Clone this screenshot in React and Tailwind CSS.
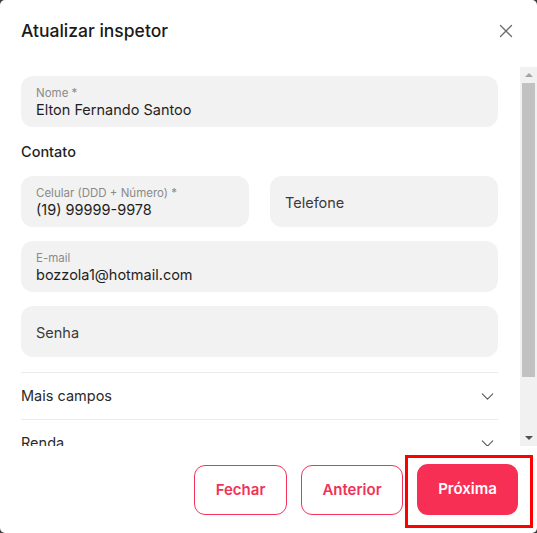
import { X, ChevronDown } from "lucide-react";

function Field({ label, value, placeholder }) {
  return (
    <div className="h-[51px] rounded-[12px] bg-[#f2f2f2] px-[15px] pt-[3px] flex flex-col justify-center">
      {label && <span className="text-[11.5px] leading-[14px] text-[#8a8a8a]">{label}</span>}
      {value && <span className="text-[14.5px] leading-[20px] text-[#1f1f1f]">{value}</span>}
      {placeholder && <span className="text-[14.5px] leading-[20px] text-[#3a3a3a]">{placeholder}</span>}
    </div>
  );
}

function Section({ title }) {
  return (
    <div className="border-t border-[#ebebeb] h-[47px] flex items-center justify-between">
      <span className="text-[14.5px] text-[#2a2a2a]">{title}</span>
      <ChevronDown className="h-[21px] w-[21px] text-[#555]" strokeWidth={1.2} />
    </div>
  );
}

function Scrollbar() {
  return (
    <div className="w-[17px] shrink-0 bg-[#f1f1f1] flex flex-col items-stretch">
      <div className="h-[16px] flex items-center justify-center">
        <div className="w-0 h-0 border-l-[4px] border-r-[4px] border-b-[4px] border-l-transparent border-r-transparent border-b-[#a3a3a3]" />
      </div>
      <div className="h-[294px] mx-[2px] bg-[#c1c1c1]" />
      <div className="flex-1" />
      <div className="h-[16px] flex items-center justify-center">
        <div className="w-0 h-0 border-l-[4px] border-r-[4px] border-t-[4px] border-l-transparent border-r-transparent border-t-[#505050]" />
      </div>
    </div>
  );
}

export default function App() {
  return (
    <div className="bg-[#3c3c3c] w-[537px] h-[533px]" style={{ fontFamily: "Inter, 'Noto Sans', sans-serif" }}>
      <div className="relative w-full h-full bg-white rounded-[5px] flex flex-col">
        <div className="h-[67px] flex items-start justify-between pl-[21px] pr-[20px] pt-[19px]">
          <h1 className="text-[17.5px] leading-[24px] font-medium text-[#1a1a1a]">Atualizar inspetor</h1>
          <X className="h-[22px] w-[22px] text-[#6b6b6b] mt-[1px]" strokeWidth={1.4} />
        </div>

        <div className="h-[379px] flex">
          <div className="flex-1 overflow-hidden pl-[21px] pr-[22px] pt-[9px]">
            <Field label="Nome *" value="Elton Fernando Santoo" />
            <div className="text-[14.5px] font-medium text-[#1f1f1f] mt-[15px] mb-[14px] leading-[20px]">Contato</div>
            <div className="grid grid-cols-2 gap-[21px]">
              <Field label="Celular (DDD + Número) *" value="(19) 99999-9978" />
              <Field placeholder="Telefone" />
            </div>
            <div className="mt-[14px]">
              <Field label="E-mail" value="bozzola1@hotmail.com" />
            </div>
            <div className="mt-[14px] mb-[15px]">
              <Field placeholder="Senha" />
            </div>
            <Section title="Mais campos" />
            <Section title="Renda" />
            <Section title="Endereço" />
          </div>
          <Scrollbar />
        </div>

        <div className="flex justify-end gap-[14px] pr-[19px] pt-[19px]">
          <button className="w-[93px] h-[50px] rounded-[11px] border border-[#f4335a] text-[#ef3358] text-[15px] font-semibold">Fechar</button>
          <button className="w-[102px] h-[50px] rounded-[11px] border border-[#f4335a] text-[#ef3358] text-[15px] font-semibold">Anterior</button>
          <button className="w-[101px] h-[51px] -mt-[1px] rounded-[11px] bg-[#f72f55] text-white text-[15px] font-semibold">Próxima</button>
        </div>

        <div className="absolute left-[405px] top-[455px] w-[128px] h-[73px] border-[3px] border-[#ff0000] pointer-events-none" />
      </div>
    </div>
  );
}
